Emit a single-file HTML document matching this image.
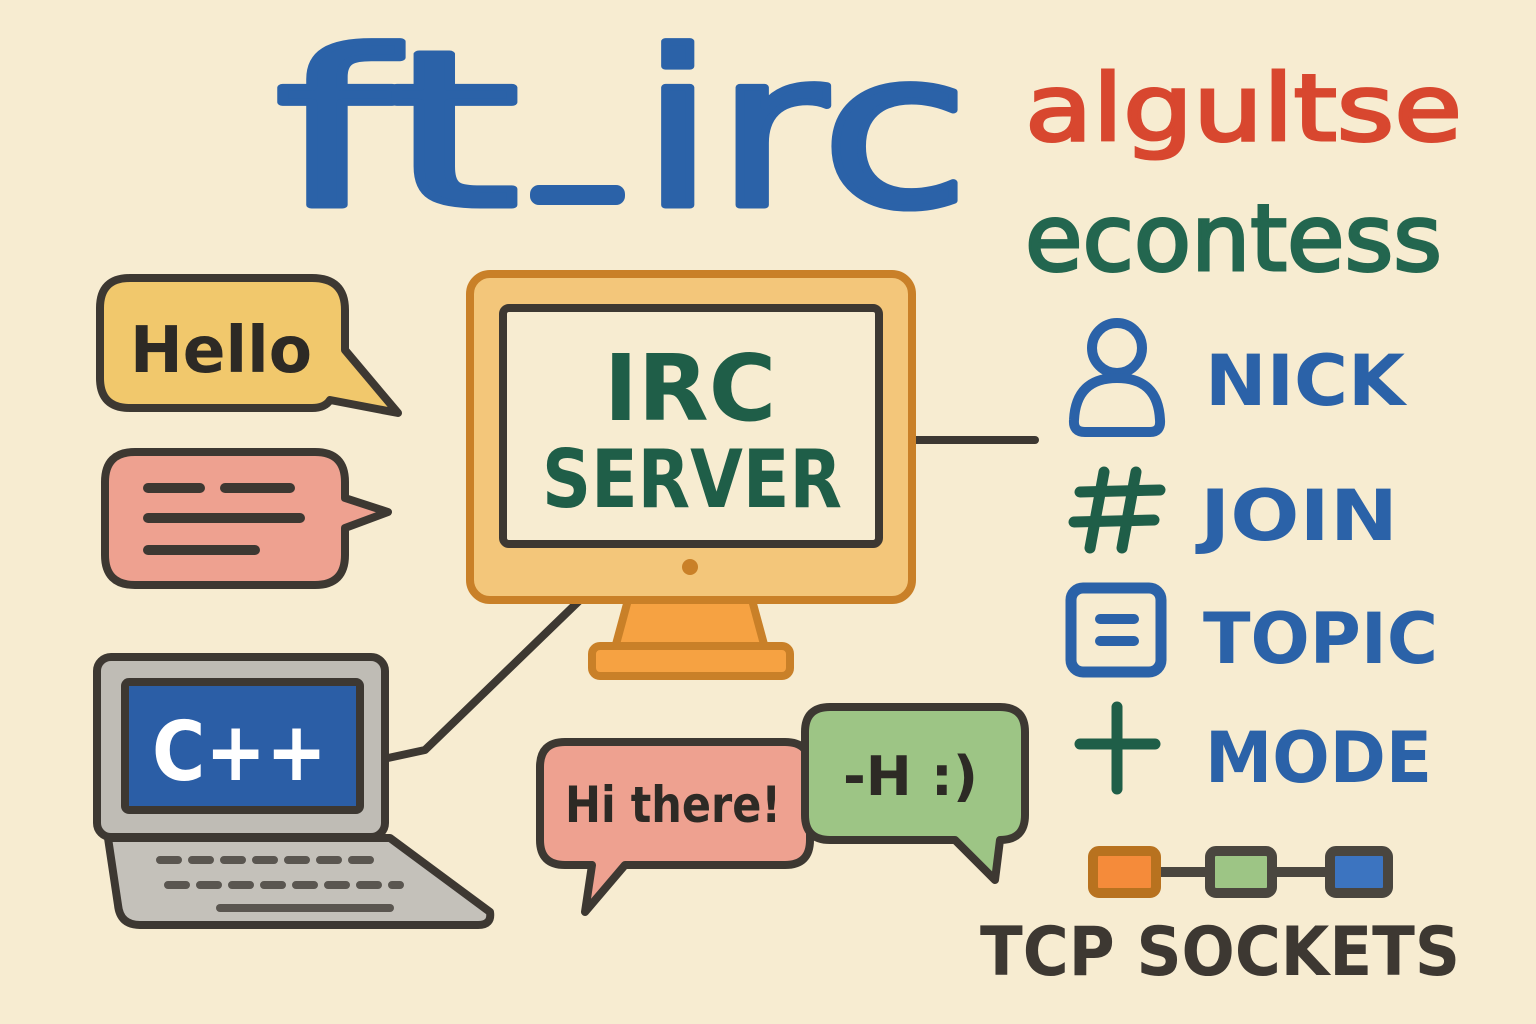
<!DOCTYPE html>
<html><head><meta charset="utf-8"><style>
html,body{margin:0;padding:0;width:1536px;height:1024px;overflow:hidden;background:#f7ecd1}
svg{display:block}
text{font-family:"DejaVu Sans","Liberation Sans",sans-serif;font-weight:bold}
</style></head><body>
<svg width="1536" height="1024" viewBox="0 0 1536 1024" xmlns="http://www.w3.org/2000/svg">
<rect width="1536" height="1024" fill="#f7ecd1"/>
<text x="275" y="205" font-size="215" fill="#2b62a8" stroke="#2b62a8" stroke-width="7" stroke-linejoin="round" textLength="245" lengthAdjust="spacingAndGlyphs" style="font-weight:normal">ft</text>
<rect x="530" y="185" width="95" height="20" rx="9" fill="#2b62a8"/>
<text x="640" y="205" font-size="215" fill="#2b62a8" stroke="#2b62a8" stroke-width="7" stroke-linejoin="round" textLength="330" lengthAdjust="spacingAndGlyphs" style="font-weight:normal">irc</text>
<text x="1025" y="140" font-size="92" fill="#d8472f" stroke="#d8472f" stroke-width="3" textLength="437" lengthAdjust="spacingAndGlyphs" style="font-weight:normal">algultse</text>
<text x="1025" y="270" font-size="92" fill="#23664f" stroke="#23664f" stroke-width="3" textLength="417" lengthAdjust="spacingAndGlyphs" style="font-weight:normal">econtess</text>

<g stroke="#3d3832" stroke-width="8" stroke-linejoin="round" stroke-linecap="round">
<path d="M130 278 H312 Q345 278 345 310 V350 L398 413 L330 400 Q325 408 312 408 H130 Q100 408 100 378 V308 Q100 278 130 278Z" fill="#f1c86c"/>
<path d="M135 452 H315 Q345 452 345 482 V498 L388 512 L345 528 V555 Q345 585 315 585 H135 Q105 585 105 555 V482 Q105 452 135 452Z" fill="#eea190"/>
<line x1="912" y1="440" x2="1035" y2="440"/>
<polyline points="388,758 425,750 580,600" fill="none"/>
<rect x="470" y="274" width="442" height="326" rx="20" fill="#f3c67a" stroke="#c98028"/>
<rect x="503" y="308" width="376" height="236" rx="6" fill="#f7ecd1"/>
<path d="M628 600 H752 L765 648 H615Z" fill="#f6a242" stroke="#c98028"/>
<rect x="592" y="646" width="198" height="30" rx="8" fill="#f6a242" stroke="#c98028"/>
<rect x="97" y="657" width="288" height="180" rx="14" fill="#bfbcb5"/>
<rect x="125" y="682" width="235" height="128" rx="4" fill="#2b5ea6"/>
<path d="M108 838 H390 L490 912 Q492 925 478 925 H140 Q120 925 118 905Z" fill="#c4c1ba"/>
<path d="M565 742 H785 Q810 742 810 767 V840 Q810 865 785 865 H625 L585 912 L592 865 H565 Q540 865 540 840 V767 Q540 742 565 742Z" fill="#eea190"/>
<path d="M830 707 H1000 Q1025 707 1025 732 V815 Q1025 840 1000 840 H1000 L995 880 L955 840 H830 Q805 840 805 815 V732 Q805 707 830 707Z" fill="#9dc585"/>
</g>
<circle cx="690" cy="567" r="8" fill="#c98028"/>
<g stroke="#3d3832" stroke-width="10" stroke-linecap="round">
<line x1="148" y1="488" x2="200" y2="488"/><line x1="225" y1="488" x2="290" y2="488"/>
<line x1="148" y1="518" x2="300" y2="518"/>
<line x1="148" y1="550" x2="255" y2="550"/>
</g>
<g stroke="#5a5650" stroke-width="8" stroke-linecap="round">
<path d="M160 860 H370" stroke-dasharray="18 14"/>
<path d="M168 885 H400" stroke-dasharray="18 14"/>
<path d="M220 908 H390"/>
</g>
<text x="690" y="420" font-size="92" fill="#1f5e48" text-anchor="middle">IRC</text>
<text x="692" y="507" font-size="80" fill="#1f5e48" text-anchor="middle" textLength="300" lengthAdjust="spacingAndGlyphs">SERVER</text>
<text x="130" y="372" font-size="64" fill="#2d2a25" textLength="182" lengthAdjust="spacingAndGlyphs">Hello</text>
<text x="152" y="780" font-size="82" fill="#ffffff" textLength="175" lengthAdjust="spacingAndGlyphs">C++</text>
<text x="565" y="822" font-size="50" fill="#2d2a25" textLength="216" lengthAdjust="spacingAndGlyphs">Hi there!</text>
<text x="843" y="795" font-size="54" fill="#2d2a25" textLength="135" lengthAdjust="spacingAndGlyphs">-H :)</text>
<g fill="none" stroke-width="10" stroke-linecap="round" stroke-linejoin="round">
<circle cx="1117" cy="348" r="25" stroke="#2b62a8"/>
<path d="M1074 420 Q1076 378 1117 378 Q1158 378 1160 420 Q1161 432 1150 432 H1085 Q1073 432 1074 420Z" stroke="#2b62a8"/>
<g stroke="#1f5e48" stroke-width="11"><line x1="1104" y1="472" x2="1090" y2="548"/><line x1="1136" y1="472" x2="1122" y2="548"/><line x1="1080" y1="492" x2="1160" y2="490"/><line x1="1074" y1="522" x2="1154" y2="520"/></g>
<rect x="1071" y="588" width="90" height="84" rx="12" stroke="#2b62a8" stroke-width="11"/>
<line x1="1100" y1="619" x2="1134" y2="619" stroke="#2b62a8"/><line x1="1100" y1="641" x2="1134" y2="641" stroke="#2b62a8"/>
<g stroke="#1f5e48" stroke-width="11"><line x1="1117" y1="707" x2="1117" y2="789"/><line x1="1080" y1="744" x2="1155" y2="744"/></g>
</g>
<g font-size="70" fill="#2b62a8">
<text x="1205" y="405" textLength="200" lengthAdjust="spacingAndGlyphs">NICK</text>
<text x="1200" y="540" textLength="198" lengthAdjust="spacingAndGlyphs">JOIN</text>
<text x="1203" y="663" textLength="235" lengthAdjust="spacingAndGlyphs">TOPIC</text>
<text x="1205" y="782" textLength="227" lengthAdjust="spacingAndGlyphs">MODE</text>
</g>
<g stroke-width="10" stroke-linejoin="round">
<line x1="1155" y1="872" x2="1335" y2="872" stroke="#4a463f"/>
<rect x="1093" y="851" width="63" height="42" rx="6" fill="#f58b3a" stroke="#b8721f"/>
<rect x="1210" y="851" width="62" height="42" rx="6" fill="#9dc585" stroke="#4a463f"/>
<rect x="1330" y="851" width="58" height="42" rx="6" fill="#3c74c0" stroke="#4a463f"/>
</g>
<text x="980" y="975" font-size="68" fill="#3d3832" textLength="480" lengthAdjust="spacingAndGlyphs">TCP SOCKETS</text>
</svg>
</body></html>
